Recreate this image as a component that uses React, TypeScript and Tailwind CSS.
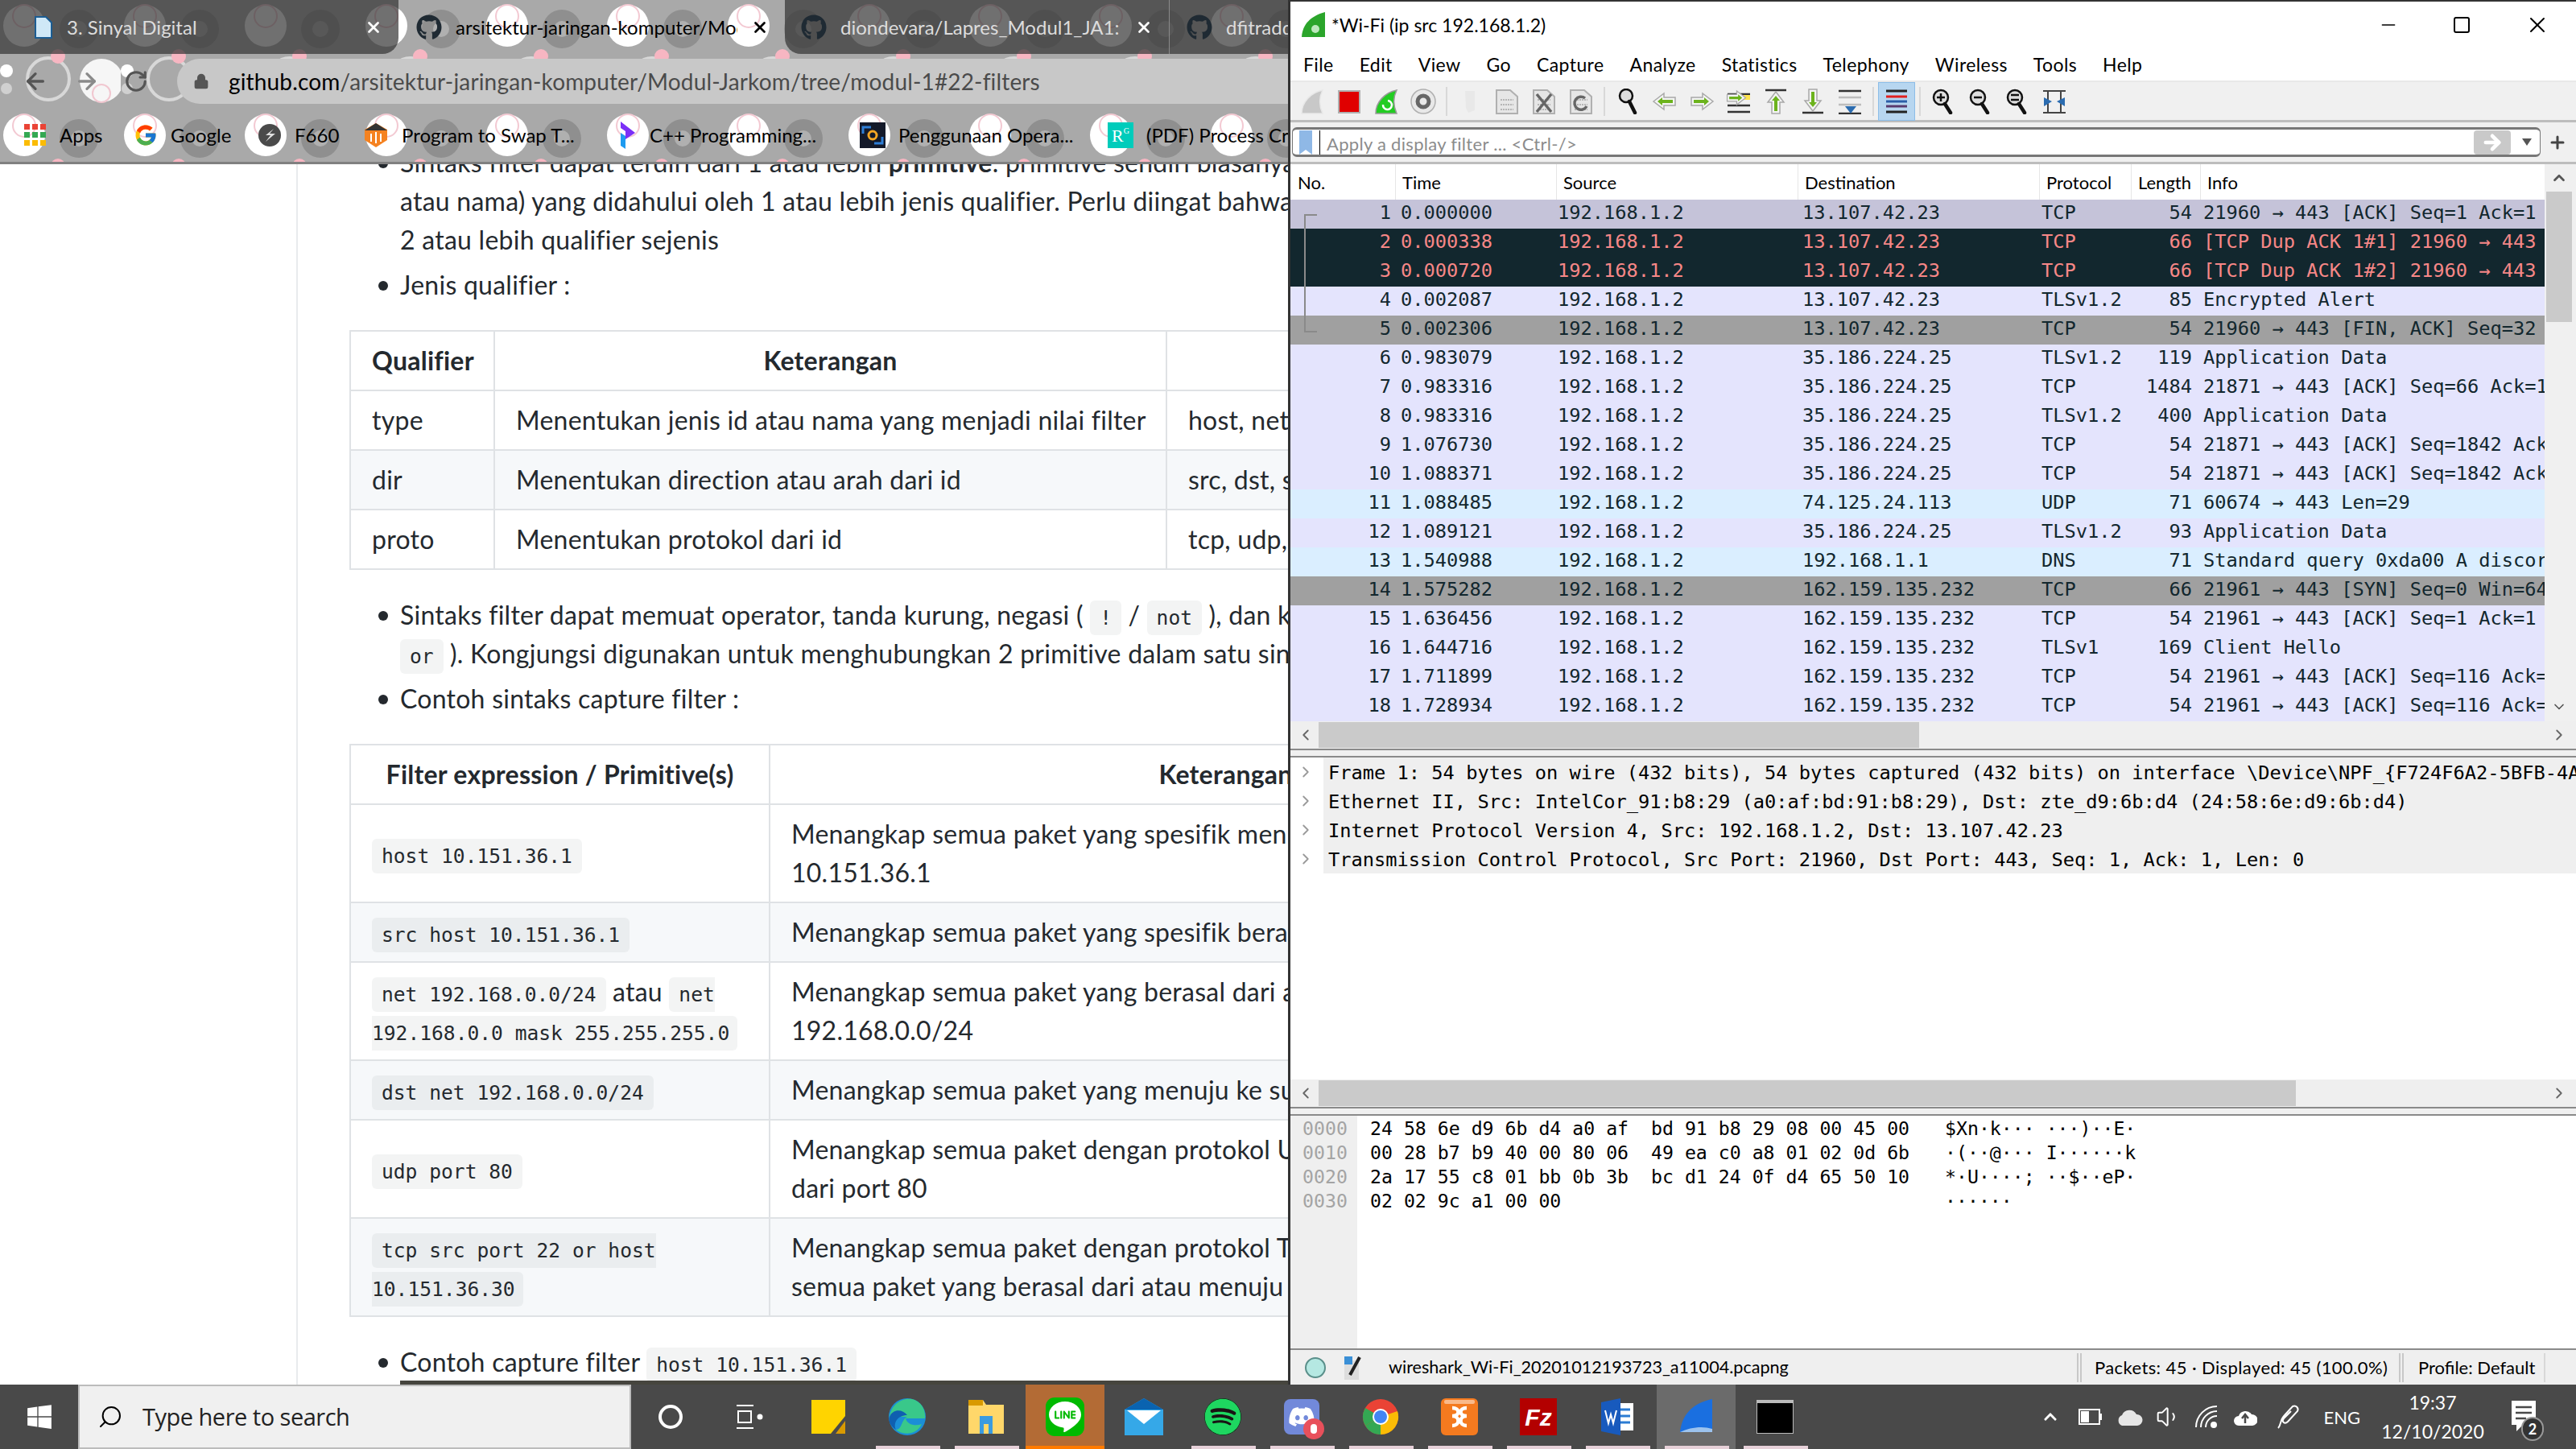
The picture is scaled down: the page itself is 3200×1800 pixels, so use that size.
import React from 'react';
import { FaGithub, FaWindows, FaDiscord, FaSpotify, FaChevronUp } from 'react-icons/fa';
import { FcGoogle } from 'react-icons/fc';
import { SiLine } from 'react-icons/si';
import { Lock, ArrowLeft, ArrowRight, RotateCw, X, Search, Minus, Square, ChevronLeft, ChevronRight, ChevronUp, ChevronDown, Plus, Volume1 } from 'lucide-react';

const sans = "font-['Lato','Open_Sans',sans-serif]";
const mono = "font-['DejaVu_Sans_Mono',monospace]";

// theme picture behind the browser tabs
const ThemeDots = () => (
  <svg className="absolute inset-0 w-full h-full" aria-hidden="true">
    <defs>
      <pattern id="dots" width="150" height="136" patternUnits="userSpaceOnUse">
        <circle cx="30" cy="32" r="26" fill="#ffffff" />
        <circle cx="30" cy="20" r="14" fill="none" stroke="#f3c9d2" strokeWidth="2" />
        <circle cx="98" cy="36" r="24" fill="#8f8f8f" />
        <circle cx="98" cy="36" r="10" fill="#b0b0b0" />
        <circle cx="60" cy="98" r="26" fill="none" stroke="#d8d8d8" strokeWidth="4" />
        <circle cx="126" cy="100" r="27" fill="#f6f6f6" />
        <circle cx="126" cy="116" r="11" fill="none" stroke="#f1c7d0" strokeWidth="2" />
        <circle cx="8" cy="88" r="8" fill="#ffffff" />
        <circle cx="8" cy="110" r="7" fill="#d0d0d0" />
        <circle cx="72" cy="70" r="9" fill="#f7b6c2" />
      </pattern>
    </defs>
    <rect width="100%" height="100%" fill="#a9a9a9" />
    <rect width="100%" height="100%" fill="url(#dots)" />
  </svg>
);

const Tab = ({ title, active, icon, className, close = true }: { title: string; active?: boolean; icon: React.ReactNode; className: string; close?: boolean }) => (
  <div className={`relative ${className} h-[67px] shrink-0 flex items-center pr-[20px] gap-[17px] ${active ? 'rounded-t-[20px] text-black' : 'bg-[#333333]/70 text-[#dcdcdc]'}`}>
    {icon}
    <span className={`flex-1 overflow-hidden whitespace-nowrap text-[24px] ${sans}`}>{title}</span>
    {close && <X className={`w-[22px] h-[22px] shrink-0 ${active ? 'text-black' : 'text-white'}`} strokeWidth={3} />}
  </div>
);

const bookmarks: { label: string; icon: React.ReactNode; w: string }[] = [
  {
    label: 'Apps',
    w: 'w-[136px]',
    icon: (
      <svg width="28" height="28" viewBox="0 0 28 28">
        {[0, 1, 2].map((r) =>
          [0, 1, 2].map((c) => (
            <rect key={`${r}${c}`} x={c * 10} y={r * 10} width="7" height="7" fill={['#ea4335', '#34a853', '#fbbc05'][r]} />
          ))
        )}
      </svg>
    ),
  },
  { label: 'Google', w: 'w-[154px]', icon: <FcGoogle className="w-[30px] h-[30px]" /> },
  {
    label: 'F660',
    w: 'w-[131px]',
    icon: (
      <svg width="30" height="30" viewBox="0 0 30 30">
        <circle cx="15" cy="15" r="14" fill="#4a4a4a" />
        <path d="M20 7 L10 15 H16 L10 23 L22 13 H15 Z" fill="#e0e0e0" />
      </svg>
    ),
  },
  {
    label: 'Program to Swap T...',
    w: 'w-[318px]',
    icon: (
      <svg width="32" height="32" viewBox="0 0 32 32">
        <path d="M16 1 L30 9 V22 L16 31 L2 22 V9 Z" fill="#f58220" />
        <path d="M2 10 L16 1 L30 10 Z" fill="#333" />
        <path d="M10 14 V24 M16 12 V26 M22 14 V24" stroke="#fff" strokeWidth="2" />
      </svg>
    ),
  },
  {
    label: 'C++ Programming...',
    w: 'w-[299px]',
    icon: (
      <svg width="22" height="34" viewBox="0 0 22 34">
        <path d="M2 0 L20 14 L8 22 V12 L2 8 Z" fill="#7b2ff7" />
        <path d="M2 14 L8 18 V34 L2 30 Z" fill="#1e9bf0" />
      </svg>
    ),
  },
  {
    label: 'Penggunaan Opera...',
    w: 'w-[308px]',
    icon: (
      <svg width="32" height="32" viewBox="0 0 32 32">
        <rect width="32" height="32" fill="#141a2a" />
        <path d="M4 14 V6 H14 M28 18 V26 H18" stroke="#2f7fd6" strokeWidth="3" fill="none" />
        <circle cx="16" cy="16" r="5" fill="none" stroke="#f5a623" strokeWidth="3" />
      </svg>
    ),
  },
  {
    label: '(PDF) Process Creation',
    w: 'w-[320px]',
    icon: <span className={`w-[32px] h-[32px] bg-[#00ccbb] text-white text-[22px] flex items-center justify-center font-['Liberation_Serif',serif]`}>R<sup className="text-[10px]">G</sup></span>,
  },
];

const ChromeHeader = () => (
  <div className="relative h-[204px] shrink-0 overflow-hidden border-b-[3px] border-[#808080]">
    <ThemeDots />
    <div className="relative flex">
      <Tab className="w-[495px] pl-[42px] rounded-br-[20px]" title="3. Sinyal Digital" icon={
        <svg width="24" height="28" viewBox="0 0 24 28" className="shrink-0"><path d="M2 1 H15 L22 8 V27 H2 Z" fill="#cfe8f7" stroke="#1c5d93" strokeWidth="2" /></svg>
      } />
      <Tab active className="w-[480px] pl-[22px]" title="arsitektur-jaringan-komputer/Modul-Jarkom" icon={<FaGithub className="w-[32px] h-[32px] text-[#1f2a33] shrink-0" />} />
      <Tab className="w-[477px] pl-[20px] rounded-bl-[20px]" title="diondevara/Lapres_Modul1_JA1:" icon={<FaGithub className="w-[32px] h-[32px] text-[#1f2a33] shrink-0" />} />
      <Tab close={false} className="w-[300px] pl-[21px] border-l border-[#8a8a8a]" title="dfitradd/" icon={<FaGithub className="w-[32px] h-[32px] text-[#1f2a33] shrink-0" />} />
    </div>
    <div className="relative flex items-center h-[68px] pl-[28px]">
      <ArrowLeft className="w-[32px] h-[32px] text-[#555]" strokeWidth={2.5} />
      <ArrowRight className="ml-[32px] w-[32px] h-[32px] text-[#8a8a8a]" strokeWidth={2.5} />
      <RotateCw className="ml-[30px] w-[30px] h-[30px] text-[#555]" strokeWidth={2.5} />
      <div className="ml-[36px] flex-1 h-[56px] rounded-l-[28px] bg-[#c8c8c8] flex items-center pl-[20px]">
        <Lock className="w-[20px] h-[24px] text-[#555] fill-[#555]" />
        <span className={`ml-[24px] text-[28px] tracking-[0.16px] text-[#4b4b4b] whitespace-nowrap ${sans}`}>
          <span className="text-black">github.com</span>/arsitektur-jaringan-komputer/Modul-Jarkom/tree/modul-1#22-filters
        </span>
      </div>
    </div>
    <div className="relative flex items-center h-[66px] pl-[30px]">
      {bookmarks.map((b) => (
        <div key={b.label} className={`${b.w} shrink-0 flex items-center gap-[16px] whitespace-nowrap`}>
          {b.icon}
          <span className={`text-[24px] text-black ${sans}`}>{b.label}</span>
        </div>
      ))}
    </div>
  </div>
);

const codeFont = `${mono} text-[24.6px] leading-none tracking-normal`;

const Code = ({ children }: { children: React.ReactNode }) => (
  <code className={`${codeFont} px-[12px] py-[7px] rounded-[6px] bg-[#1b1f230d]`}>{children}</code>
);

// a code pill that wraps over two lines: open on the right of the first, on the left of the second
const CodeStart = ({ children }: { children: React.ReactNode }) => (
  <code className={`${codeFont} pl-[12px] py-[7px] rounded-l-[6px] bg-[#1b1f230d]`}>{children}</code>
);
const CodeEnd = ({ children }: { children: React.ReactNode }) => (
  <code className={`${codeFont} pr-[10px] py-[7px] rounded-r-[6px] bg-[#1b1f230d]`}>{children}</code>
);

const Bullet = ({ children, className = '' }: { children: React.ReactNode; className?: string }) => (
  <li className={`relative pl-[63px] leading-[48px] whitespace-nowrap ${className}`}>
    <span className="absolute left-[36px] top-[19px] w-[12px] h-[12px] rounded-full bg-[#24292e]" />
    {children}
  </li>
);

const qualifierRows = [
  ['type', 'Menentukan jenis id atau nama yang menjadi nilai filter', 'host, net, port, portrange'],
  ['dir', 'Menentukan direction atau arah dari id', 'src, dst, src or dst, src and dst'],
  ['proto', 'Menentukan protokol dari id', 'tcp, udp, icmp, arp'],
];

const filterRows: { expr: React.ReactNode; text: React.ReactNode }[] = [
  { expr: <Code>host 10.151.36.1</Code>, text: <>Menangkap semua paket yang spesifik menuju atau berasal dari<br />10.151.36.1</> },
  { expr: <Code>src host 10.151.36.1</Code>, text: 'Menangkap semua paket yang spesifik berasal dari 10.151.36.1' },
  {
    expr: <>
      <Code>net 192.168.0.0/24</Code> atau <CodeStart>net</CodeStart><br />
      <CodeEnd>192.168.0.0 mask 255.255.255.0</CodeEnd>
    </>,
    text: <>Menangkap semua paket yang berasal dari atau menuju<br />192.168.0.0/24</>,
  },
  { expr: <Code>dst net 192.168.0.0/24</Code>, text: 'Menangkap semua paket yang menuju ke subnet 192.168.0.0/24' },
  { expr: <Code>udp port 80</Code>, text: <>Menangkap semua paket dengan protokol UDP yang menuju atau<br />dari port 80</> },
  {
    expr: <>
      <CodeStart>tcp src port 22 or host</CodeStart><br />
      <CodeEnd>10.151.36.30</CodeEnd>
    </>,
    text: <>Menangkap semua paket dengan protokol TCP port 22 dan<br />semua paket yang berasal dari atau menuju 10.151.36.30</>,
  },
];

const tdClass = 'border-2 border-[#dfe2e5] px-[26px] py-[12px] leading-[48px] whitespace-nowrap overflow-hidden';

const GithubPage = () => (
  <div className={`relative flex-1 overflow-hidden bg-white text-[32px] tracking-[0.25px] text-[#24292e] ${sans}`}>
    <div className="absolute left-[368px] top-0 bottom-0 w-[2px] bg-[#e9ebed]" />
    <div className="ml-[434px] w-[1656px] -mt-[26px]">
      <ul>
        <Bullet>
          Sintaks filter dapat terdiri dari 1 atau lebih <b>primitive</b>. primitive sendiri biasanya berupa id (angka<br />
          atau nama) yang didahului oleh 1 atau lebih jenis qualifier. Perlu diingat bahwa tidak boleh ada<br />
          2 atau lebih qualifier sejenis
        </Bullet>
        <Bullet className="mt-[8px]">Jenis qualifier :</Bullet>
      </ul>
      <table className="table-fixed border-collapse w-[1656px] mt-[32px]">
        <colgroup>
          <col className="w-[179px]" />
          <col className="w-[835px]" />
          <col />
        </colgroup>
        <thead>
          <tr>
            <th className={`${tdClass} font-bold`}>Qualifier</th>
            <th className={`${tdClass} font-bold`}>Keterangan</th>
            <th className={`${tdClass} font-bold`}>Contoh nilai</th>
          </tr>
        </thead>
        <tbody>
          {qualifierRows.map((r, i) => (
            <tr key={r[0]} className={i % 2 === 1 ? 'bg-[#f6f8fa]' : 'bg-white'}>
              {r.map((c) => <td key={c} className={tdClass}>{c}</td>)}
            </tr>
          ))}
        </tbody>
      </table>
      <ul className="mt-[32px]">
        <Bullet>
          Sintaks filter dapat memuat operator, tanda kurung, negasi ( <Code>!</Code> / <Code>not</Code> ), dan konjungsi ( <Code>and</Code> /<br />
          <Code>or</Code> ). Kongjungsi digunakan untuk menghubungkan 2 primitive dalam satu sintaks
        </Bullet>
        <Bullet className="mt-[8px]">Contoh sintaks capture filter :</Bullet>
      </ul>
      <table className="table-fixed border-collapse w-[1656px] mt-[32px]">
        <colgroup>
          <col className="w-[521px]" />
          <col />
        </colgroup>
        <thead>
          <tr>
            <th className={`${tdClass} font-bold`}>Filter expression / Primitive(s)</th>
            <th className={`${tdClass} font-bold`}>Keterangan</th>
          </tr>
        </thead>
        <tbody>
          {filterRows.map((r, i) => (
            <tr key={i} className={i % 2 === 1 ? 'bg-[#f6f8fa]' : 'bg-white'}>
              <td className={tdClass}>{r.expr}</td>
              <td className={tdClass}>{r.text}</td>
            </tr>
          ))}
        </tbody>
      </table>
      <ul className="mt-[32px]">
        <Bullet>Contoh capture filter <Code>host 10.151.36.1</Code></Bullet>
      </ul>
    </div>
    <div className="absolute left-[497px] right-0 bottom-0 h-[5px] bg-[#46453e]" />
  </div>
);

// ---- wireshark ----

type Pkt = [number, string, string, string, string, number, string, string];
const L = 'bg-[#e4e4fd] text-[#12272e]';
const B = 'bg-[#daeeff] text-[#12272e]';
const G = 'bg-[#a0a0a0] text-[#12272e]';
const D = 'bg-[#12272e] text-[#f78787]';
const S = 'bg-[#c5c3d9] text-[#12272e]';
const A = '192.168.1.2';
const M = '35.186.224.25';
const C = '162.159.135.232';

const packets: Pkt[] = [
  [1, '0.000000', A, '13.107.42.23', 'TCP', 54, '21960 → 443 [ACK] Seq=1 Ack=1', S],
  [2, '0.000338', A, '13.107.42.23', 'TCP', 66, '[TCP Dup ACK 1#1] 21960 → 443', D],
  [3, '0.000720', A, '13.107.42.23', 'TCP', 66, '[TCP Dup ACK 1#2] 21960 → 443', D],
  [4, '0.002087', A, '13.107.42.23', 'TLSv1.2', 85, 'Encrypted Alert', L],
  [5, '0.002306', A, '13.107.42.23', 'TCP', 54, '21960 → 443 [FIN, ACK] Seq=32', G],
  [6, '0.983079', A, M, 'TLSv1.2', 119, 'Application Data', L],
  [7, '0.983316', A, M, 'TCP', 1484, '21871 → 443 [ACK] Seq=66 Ack=1', L],
  [8, '0.983316', A, M, 'TLSv1.2', 400, 'Application Data', L],
  [9, '1.076730', A, M, 'TCP', 54, '21871 → 443 [ACK] Seq=1842 Ack', L],
  [10, '1.088371', A, M, 'TCP', 54, '21871 → 443 [ACK] Seq=1842 Ack', L],
  [11, '1.088485', A, '74.125.24.113', 'UDP', 71, '60674 → 443 Len=29', B],
  [12, '1.089121', A, M, 'TLSv1.2', 93, 'Application Data', L],
  [13, '1.540988', A, '192.168.1.1', 'DNS', 71, 'Standard query 0xda00 A discor', B],
  [14, '1.575282', A, C, 'TCP', 66, '21961 → 443 [SYN] Seq=0 Win=64', G],
  [15, '1.636456', A, C, 'TCP', 54, '21961 → 443 [ACK] Seq=1 Ack=1', L],
  [16, '1.644716', A, C, 'TLSv1', 169, 'Client Hello', L],
  [17, '1.711899', A, C, 'TCP', 54, '21961 → 443 [ACK] Seq=116 Ack=', L],
  [18, '1.728934', A, C, 'TCP', 54, '21961 → 443 [ACK] Seq=116 Ack=', L],
];

const menus = ['File', 'Edit', 'View', 'Go', 'Capture', 'Analyze', 'Statistics', 'Telephony', 'Wireless', 'Tools', 'Help'];

const Ico = ({ children }: { children: React.ReactNode }) => (
  <svg width="32" height="32" viewBox="0 0 32 32">{children}</svg>
);

const DocIcon = ({ children }: { children?: React.ReactNode }) => (
  <Ico>
    <path d="M3 2 H20 L29 10 V31 H3 Z" fill="#e6e6e6" stroke="#b0b0b0" strokeWidth="2" />
    <path d="M8 14 H24 M8 20 H24 M8 26 H24" stroke="#b5b5b5" strokeWidth="2" strokeDasharray="2 1" />
    {children}
  </Ico>
);

// green arrow with a pale outline, pointing left; rotated for the others
const Arrow = ({ rot = 0 }: { rot?: number }) => (
  <g transform={`rotate(${rot} 16 16)`}>
    <path d="M2 16 L15 6 V11 H29 V21 H15 V26 Z" fill="#f4f4f4" stroke="#a8a8a8" strokeWidth="1.5" />
    <path d="M7 16 L13 11 V14 H26 V18 H13 V21 Z" fill="#6cb31d" />
  </g>
);

const Mag = ({ sign }: { sign?: string }) => (
  <Ico>
    <circle cx="13" cy="11" r="9" fill="#dedede" stroke="#111" strokeWidth="2.5" />
    <path d="M18 19 L25 30" stroke="#111" strokeWidth="4.5" strokeLinecap="round" />
    {sign === '+' && <path d="M8 11 H18 M13 6 V16" stroke="#111" strokeWidth="2.5" />}
    {sign === '-' && <path d="M8 11 H18" stroke="#111" strokeWidth="2.5" />}
    {sign === '=' && <path d="M8 8 H18 M8 14 H18" stroke="#111" strokeWidth="2.5" />}
  </Ico>
);

const toolItems: React.ReactNode[] = [
  <Ico><path d="M3 31 C3 17 14 5 29 2 C24 12 25 22 29 31 Z" fill="#c8c8c8" stroke="#e8e8e8" strokeWidth="1.5" /></Ico>,
  <Ico><rect x="3" y="3" width="26" height="27" fill="#e00000" stroke="#b0b0b0" strokeWidth="2" /></Ico>,
  <Ico><path d="M3 31 C3 17 14 5 29 2 C24 12 25 22 29 31 Z" fill="#22cc22" stroke="#9a9a9a" strokeWidth="1.5" /><path d="M12 20 a5.5 5.5 0 1 0 6 -5" fill="none" stroke="#fff" strokeWidth="2.5" /></Ico>,
  <Ico><circle cx="16" cy="16" r="15" fill="#e8e8e8" stroke="#b0b0b0" strokeWidth="1.5" /><circle cx="16" cy="16" r="7" fill="none" stroke="#666" strokeWidth="5" /></Ico>,
  'sep',
  <Ico><path d="M10 3 H22 V27 L14 30 L11 24 Z" fill="#e8e8e8" /></Ico>,
  <DocIcon />,
  <DocIcon><path d="M7 7 L25 29 M25 7 L7 29" stroke="#666" strokeWidth="3.5" /></DocIcon>,
  <DocIcon><path d="M23 22 a8 8 0 1 1 -2 -10" fill="none" stroke="#666" strokeWidth="3.5" /></DocIcon>,
  'sep',
  <Ico>
    <circle cx="14" cy="9" r="8" fill="#dedede" stroke="#111" strokeWidth="2.5" />
    <path d="M18 16 L25 30" stroke="#111" strokeWidth="4.5" strokeLinecap="round" />
  </Ico>,
  <Ico><Arrow /></Ico>,
  <Ico><Arrow rot={180} /></Ico>,
  <Ico><path d="M2 7 H30 M2 21 H30 M2 29 H30" stroke="#333" strokeWidth="2.5" /><rect x="22" y="8" width="8" height="6" fill="#ffe34d" /><g transform="translate(-1 -2) scale(.85)"><Arrow rot={180} /></g></Ico>,
  <Ico><path d="M3 2 H29" stroke="#333" strokeWidth="2.5" /><g transform="translate(0 2)"><Arrow rot={90} /></g></Ico>,
  <Ico><path d="M3 30 H29" stroke="#333" strokeWidth="2.5" /><g transform="translate(0 -2)"><Arrow rot={-90} /></g></Ico>,
  <Ico><path d="M2 3 H30 M2 31 H30" stroke="#333" strokeWidth="2.5" /><path d="M2 11 H30 M2 20 H30" stroke="#bdbdbd" strokeWidth="2.5" /><path d="M10 22 H24 L17 31 Z" fill="#2b6cb0" /></Ico>,
  'sep',
  'auto',
  'sep',
  <Mag sign="+" />,
  <Mag sign="-" />,
  <Mag sign="=" />,
  <Ico><path d="M2 3 H30 M2 30 H30 M8 3 V30 M24 3 V30" stroke="#444" strokeWidth="2" /><path d="M3 11 L13 16 L3 22 Z M29 11 L19 16 L29 22 Z" fill="#2b6cb0" /></Ico>,
];

const detailLines = [
  'Frame 1: 54 bytes on wire (432 bits), 54 bytes captured (432 bits) on interface \\Device\\NPF_{F724F6A2-5BFB-4A',
  'Ethernet II, Src: IntelCor_91:b8:29 (a0:af:bd:91:b8:29), Dst: zte_d9:6b:d4 (24:58:6e:d9:6b:d4)',
  'Internet Protocol Version 4, Src: 192.168.1.2, Dst: 13.107.42.23',
  'Transmission Control Protocol, Src Port: 21960, Dst Port: 443, Seq: 1, Ack: 1, Len: 0',
];

const hexLines = [
  ['0000', '24 58 6e d9 6b d4 a0 af  bd 91 b8 29 08 00 45 00', '$Xn·k··· ···)··E·'],
  ['0010', '00 28 b7 b9 40 00 80 06  49 ea c0 a8 01 02 0d 6b', '·(··@··· I······k'],
  ['0020', '2a 17 55 c8 01 bb 0b 3b  bc d1 24 0f d4 65 50 10', '*·U····; ··$··eP·'],
  ['0030', '02 02 9c a1 00 00', '······'],
];

const HScroll = ({ thumb }: { thumb: string }) => (
  <div className="h-[34px] shrink-0 bg-[#efefef] flex items-center">
    <ChevronLeft className="w-[22px] h-[22px] ml-[8px] mr-[5px] text-[#666] shrink-0" />
    <div className="flex-1 h-full py-[1px]"><div className={`${thumb} h-full bg-[#cacaca]`} /></div>
    <ChevronRight className="w-[22px] h-[22px] mx-[10px] text-[#666] shrink-0" />
  </div>
);

const Wireshark = () => (
  <div className={`flex-1 flex flex-col min-w-0 bg-white text-black border-t-[2px] border-l-[3px] border-[#333] tracking-[0.4px] ${sans}`}>
    <div className="h-[58px] shrink-0 flex items-center pl-[13px]">
      <svg width="32" height="34" viewBox="0 0 32 34"><path d="M1 32 C2 16 12 6 30 1 L30 32 Z" fill="#2ba52b" /><circle cx="18" cy="22" r="5" fill="#bde8bd" /></svg>
      <span className="ml-[6px] text-[23px] tracking-normal">*Wi-Fi (ip src 192.168.1.2)</span>
      <div className="ml-auto flex items-center">
        <Minus className="w-[26px] h-[26px] mr-[66px]" strokeWidth={1.5} />
        <Square className="w-[24px] h-[24px] mr-[66px]" strokeWidth={2} />
        <X className="w-[32px] h-[32px] mr-[32px]" strokeWidth={1.5} />
      </div>
    </div>
    <div className="h-[42px] shrink-0 flex items-center pl-[16px] gap-[32px] text-[23px] border-b-[2px] border-[#e8e8e8]">
      {menus.map((m) => <span key={m}>{m}</span>)}
    </div>
    <div className="h-[50px] shrink-0 bg-[#f0f0f0] border-b-[3px] border-[#bdbdbd] flex items-center pl-[4px]">
      {toolItems.map((it, i) =>
        it === 'sep' ? (
          <div key={i} className="w-[2px] h-[36px] bg-[#d8d8d8] mx-[5px] shrink-0" />
        ) : it === 'auto' ? (
          <div key={i} className="w-[46px] h-[48px] shrink-0 bg-[#b7d6f0] border border-[#8cbde8] flex items-center justify-center">
            <Ico><path d="M3 3 H29 M3 29 H29" stroke="#222" strokeWidth="3" /><path d="M3 10 H29" stroke="#e02020" strokeWidth="3" /><path d="M3 16 H29" stroke="#2b5ea8" strokeWidth="3" /><path d="M3 22 H29" stroke="#5a3a6e" strokeWidth="3" /></Ico>
          </div>
        ) : (
          <div key={i} className="w-[46px] h-[47px] shrink-0 flex items-center justify-center">{it}</div>
        )
      )}
    </div>
    <div className="h-[52px] shrink-0 bg-[#f0f0f0] border-b-[3px] border-[#bdbdbd] flex items-center px-[2px]">
      <div className="flex-1 h-[37px] bg-white rounded-[6px] border-y-[3px] border-x-[1px] border-[#777] flex items-center pl-[8px] pr-[4px]">
        <svg width="16" height="30" viewBox="0 0 16 30"><path d="M0 0 H16 V30 L8 24 L0 30 Z" fill="#8fb8e6" /></svg>
        <div className="ml-[9px] w-[1px] h-[30px] bg-black" />
        <span className="ml-[8px] pt-[3px] text-[22px] tracking-[0.3px] text-[#8c8c8c]">Apply a display filter ... &lt;Ctrl-/&gt;</span>
        <div className="ml-auto w-[46px] h-[30px] rounded-[4px] bg-[#c9c9c9] flex items-center justify-center">
          <ArrowRight className="w-[28px] h-[28px] text-white" strokeWidth={4} />
        </div>
        <div className="ml-[14px] w-0 h-0 border-x-[6px] border-x-transparent border-t-[9px] border-t-[#555]" />
        <div className="w-[6px]" />
      </div>
      <Plus className="w-[24px] h-[24px] mx-[9px] text-[#444]" strokeWidth={3} />
    </div>
    <div className="relative h-[692px] shrink-0 flex">
      <div className="flex-1 min-w-0 flex flex-col">
        <div className="h-[44px] shrink-0 flex text-[22px] tracking-normal items-center">
          <span className="w-[131px] h-full pl-[9px] flex items-center border-r border-[#e6e6e6]">No.</span>
          <span className="w-[200px] h-full pl-[8px] flex items-center border-r border-[#e6e6e6]">Time</span>
          <span className="w-[300px] h-full pl-[8px] flex items-center border-r border-[#e6e6e6]">Source</span>
          <span className="w-[300px] h-full pl-[8px] flex items-center border-r border-[#e6e6e6]">Destination</span>
          <span className="w-[114px] h-full pl-[8px] flex items-center border-r border-[#e6e6e6]">Protocol</span>
          <span className="w-[86px] h-full pl-[8px] flex items-center border-r border-[#e6e6e6]">Length</span>
          <span className="pl-[8px]">Info</span>
        </div>
        <div className={`relative ${mono} text-[23.7px] tracking-normal`}>
          {packets.map((p) => (
            <div key={p[0]} className={`h-[36px] pb-[2px] flex items-center whitespace-pre overflow-hidden ${p[7]}`}>
              <span className="w-[125px] shrink-0 text-right">{p[0]}</span>
              <span className="w-[200px] shrink-0 pl-[12px]">{p[1]}</span>
              <span className="w-[300px] shrink-0 pl-[7px]">{p[2]}</span>
              <span className="w-[301px] shrink-0 pl-[11px]">{p[3]}</span>
              <span className="w-[114px] shrink-0 pl-[7px]">{p[4]}</span>
              <span className="w-[80px] shrink-0 text-right">{p[5]}</span>
              <span className="pl-[14px]">{p[6]}</span>
            </div>
          ))}
          <div className="absolute left-[17px] top-[18px] w-[2px] h-[146px] bg-[#8a8a8a]" />
          <div className="absolute left-[17px] top-[18px] w-[16px] h-[2px] bg-[#8a8a8a]" />
          <div className="absolute left-[17px] top-[163px] w-[16px] h-[2px] bg-[#8a8a8a]" />
        </div>
      </div>
      <div className="w-[39px] shrink-0 flex flex-col bg-[#f0f0f0] pl-[2px] pr-[5px]">
        <div className="h-[34px] shrink-0 flex items-center justify-center"><ChevronUp className="w-[22px] h-[22px] text-[#555]" strokeWidth={3} /></div>
        <div className="h-[162px] bg-[#cacaca]" />
        <div className="mt-auto h-[34px] mb-[1px] flex items-center justify-center"><ChevronDown className="w-[20px] h-[20px] text-[#555]" /></div>
      </div>
    </div>
    <div className="shrink-0"><HScroll thumb="w-[746px]" /></div>
    <div className="h-[11px] shrink-0 bg-[#f0f0f0] border-y-[2px] border-[#8a8a8a]" />
    <div className="flex-1 min-h-0 flex flex-col overflow-hidden">
      <div className={`${mono} text-[23.7px] tracking-normal whitespace-pre`}>
        {detailLines.map((d) => (
          <div key={d} className="h-[36px] flex items-center">
            <span className="w-[41px] h-full shrink-0 flex items-center pl-[8px]"><ChevronRight className="w-[22px] h-[24px] text-[#9a9a9a]" /></span>
            <span className="flex-1 h-full bg-[#efefef] flex items-center pl-[6px] pt-[3px] overflow-hidden">{d}</span>
          </div>
        ))}
      </div>
      <div className="mt-auto"><HScroll thumb="w-[1214px]" /></div>
    </div>
    <div className="h-[11px] shrink-0 bg-[#f0f0f0] border-y-[2px] border-[#8a8a8a]" />
    <div className={`h-[289px] shrink-0 flex ${mono} text-[23.2px] tracking-normal whitespace-pre`}>
      <div className="w-[83px] shrink-0 bg-[#efefef] pl-[15px] pt-[1px] text-[#a4a4a4]">
        {hexLines.map((h) => <div key={h[0]} className="h-[30px] flex items-center">{h[0]}</div>)}
      </div>
      <div className="pl-[16px] pt-[1px]">
        {hexLines.map((h) => (
          <div key={h[0]} className="h-[30px] flex items-center">
            <span className="w-[714px] shrink-0">{h[1]}</span>
            <span>{h[2]}</span>
          </div>
        ))}
      </div>
    </div>
    <div className="h-[45px] shrink-0 bg-[#efefef] border-t-[2px] border-[#8a8a8a] flex items-center text-[22px] whitespace-nowrap">
      <div className="ml-[18px] w-[26px] h-[26px] rounded-full bg-[#b5e8e2] border-2 border-[#5a8f8a]" />
      <svg className="ml-[22px]" width="24" height="30" viewBox="0 0 24 30"><rect x="1" y="6" width="18" height="24" fill="#ddd" /><rect x="1" y="1" width="10" height="10" fill="#3a8fd6" /><path d="M8 24 L20 2" stroke="#222" strokeWidth="4" /></svg>
      <span className="ml-[32px] text-[21.6px] tracking-normal">wireshark_Wi-Fi_20201012193723_a11004.pcapng</span>
      <div className="ml-auto flex items-center h-full">
        <div className="w-[6px] h-[36px] border-x-2 border-[#c8c8c8]" />
        <span className="ml-[16px] w-[378px]">Packets: 45 · Displayed: 45 (100.0%)</span>
        <div className="w-[6px] h-[36px] border-x-2 border-[#c8c8c8]" />
        <span className="ml-[18px] w-[156px] tracking-normal">Profile: Default</span>
        <div className="w-[2px] h-[36px] bg-[#d8d8d8]" />
        <div className="w-[38px]" />
      </div>
    </div>
  </div>
);

// ---- taskbar ----

const TaskIcon = ({ children, open, active, line }: { children: React.ReactNode; open?: boolean; active?: boolean; line?: boolean }) => (
  <div className={`relative w-[98px] h-full shrink-0 flex items-center justify-center ${active ? 'bg-[#6b6b6b]' : ''} ${line ? 'bg-[#b36b35]' : ''}`}>
    {children}
    {open && <div className="absolute bottom-0 left-[10px] right-[8px] h-[4px] bg-[#e6d0d8]" />}
    {line && <div className="absolute bottom-0 left-0 right-0 h-[4px] bg-[#ff7a00]" />}
  </div>
);

const Taskbar = () => (
  <div className={`h-[80px] shrink-0 bg-[#494949] flex items-stretch text-white ${sans}`}>
    <div className="w-[97px] flex items-center justify-center"><FaWindows className="w-[34px] h-[34px] text-white" /></div>
    <div className="w-[687px] bg-[#f0f0f0] border-2 border-[#bcbcbc] flex items-center pl-[22px] text-[#222]">
      <Search className="w-[32px] h-[32px] -scale-x-100 text-black" strokeWidth={1.5} />
      <span className={`ml-[24px] text-[29px] font-['Open_Sans',sans-serif] tracking-[-0.5px]`}>Type here to search</span>
    </div>
    <TaskIcon><div className="w-[30px] h-[30px] rounded-full border-[4px] border-white" /></TaskIcon>
    <TaskIcon>
      <svg width="34" height="32" viewBox="0 0 34 32" fill="none" stroke="#fff" strokeWidth="2"><path d="M1 2 H22 M1 30 H22" /><rect x="3" y="9" width="16" height="14" /><circle cx="30" cy="16" r="2.5" fill="#fff" /></svg>
    </TaskIcon>
    <TaskIcon>
      <svg width="42" height="42" viewBox="0 0 42 42"><rect width="42" height="42" fill="#ffd400" /><path d="M42 20 V42 H24 Z" fill="#4a4a4a" /><path d="M42 26 V42 H30 Z" fill="#d99a00" /></svg>
    </TaskIcon>
    <TaskIcon open>
      <svg width="48" height="48" viewBox="0 0 48 48"><circle cx="24" cy="24" r="23" fill="#1b8ed6" /><path d="M2 24 C4 8 18 0 30 2 C42 5 47 16 46 26 H22 C24 34 34 36 42 33 C36 46 20 48 10 40 C18 40 16 28 24 24 Z" fill="#39c88a" /><path d="M24 22 C12 22 6 32 10 40 C4 36 0 30 2 24 C6 14 18 14 24 22 Z" fill="#0f5fb0" /></svg>
    </TaskIcon>
    <TaskIcon open>
      <svg width="44" height="42" viewBox="0 0 44 42"><path d="M0 0 H18 L22 6 H44 V42 H0 Z" fill="#ffd76a" /><rect width="18" height="7" fill="#d99a00" /><rect x="14" y="20" width="16" height="22" fill="#3b9be0" /><rect x="19" y="30" width="6" height="12" fill="#ffd76a" /></svg>
    </TaskIcon>
    <TaskIcon line>
      <span className="w-[48px] h-[48px] rounded-[11px] bg-[#00b900] flex items-center justify-center"><SiLine className="w-[40px] h-[40px] text-white" /></span>
    </TaskIcon>
    <TaskIcon>
      <svg width="48" height="46" viewBox="0 0 48 46"><path d="M0 14 L24 0 L48 14 V46 H0 Z" fill="#35a8e8" /><path d="M0 14 L24 0 L48 14 Z" fill="#0a63b0" /><path d="M3 15 H45 L24 32 Z" fill="#fff" /></svg>
    </TaskIcon>
    <TaskIcon open><span className="w-[46px] h-[46px] rounded-full bg-[#1ed760] flex items-center justify-center"><FaSpotify className="w-[46px] h-[46px] text-[#1ed760] bg-[#191414] rounded-full" /></span></TaskIcon>
    <TaskIcon open>
      <span className="relative w-[44px] h-[44px] rounded-[8px] bg-[#7289da] flex items-center justify-center">
        <FaDiscord className="w-[34px] h-[34px] text-white" />
        <span className="absolute -right-[6px] -bottom-[6px] w-[26px] h-[26px] rounded-full bg-[#e8505b] flex items-center justify-center"><span className="w-[8px] h-[12px] rounded-full bg-white" /></span>
      </span>
    </TaskIcon>
    <TaskIcon open>
      <svg width="46" height="46" viewBox="0 0 46 46"><circle cx="23" cy="23" r="22" fill="#ea4335" /><path d="M23 23 L4 34 A22 22 0 0 0 23 45 Z" fill="#34a853" /><path d="M4 12 A22 22 0 0 0 4 34 L23 23 Z" fill="#34a853" /><path d="M23 23 L23 45 A22 22 0 0 0 44 16 Z" fill="#fbbc05" /><circle cx="23" cy="23" r="10" fill="#fff" /><circle cx="23" cy="23" r="8" fill="#4285f4" /></svg>
    </TaskIcon>
    <TaskIcon open>
      <svg width="46" height="46" viewBox="0 0 46 46"><rect width="46" height="46" rx="6" fill="#f47a1f" /><rect x="4" y="2" width="38" height="5" rx="2" fill="#f9b98a" /><path d="M14 12 C24 12 24 22 14 22 C24 22 24 34 14 34 M32 12 C22 12 22 22 32 22 C22 22 22 34 32 34" fill="none" stroke="#fff" strokeWidth="4.5" /></svg>
    </TaskIcon>
    <TaskIcon open>
      <span className={`w-[46px] h-[46px] bg-[#b30000] flex items-center justify-center text-white text-[30px] font-bold italic font-['Liberation_Sans',sans-serif]`}>Fz</span>
    </TaskIcon>
    <TaskIcon open>
      <svg width="40" height="46" viewBox="0 0 40 46"><rect x="14" y="6" width="26" height="34" fill="#fff" /><path d="M18 14 H36 M18 22 H36 M18 30 H36" stroke="#2b7cd3" strokeWidth="3" /><path d="M0 5 L24 0 V46 L0 41 Z" fill="#185abd" /><path d="M5 15 L9 31 L12 20 L15 31 L19 15" fill="none" stroke="#fff" strokeWidth="2" /></svg>
    </TaskIcon>
    <TaskIcon open active>
      <svg width="44" height="46" viewBox="0 0 44 46"><path d="M2 42 C4 22 16 6 42 1 V42 Z" fill="#1a6fe0" /><path d="M2 42 H42 V38 C30 34 14 36 2 42 Z" fill="#9cc3ee" /></svg>
    </TaskIcon>
    <TaskIcon open>
      <span className="relative w-[46px] h-[42px] bg-black border-t-[4px] border-[#bbb] border-x border-b" />
    </TaskIcon>
    <div className="flex-1 flex items-center justify-end pr-[46px]">
      <FaChevronUp className="w-[22px] h-[18px] text-white mr-[24px]" />
      <svg className="mr-[16px]" width="30" height="20" viewBox="0 0 30 20" fill="none" stroke="#fff" strokeWidth="2"><rect x="1" y="1" width="25" height="18" /><rect x="4" y="4" width="8" height="12" fill="#fff" /><path d="M28 6 V14" /></svg>
      <svg className="mr-[16px]" width="34" height="24" viewBox="0 0 34 24"><path d="M8 23 A7 7 0 0 1 8 10 A10 10 0 0 1 26 9 A7 7 0 0 1 27 23 Z" fill="#e6e6e6" /></svg>
      <Volume1 className="w-[32px] h-[32px] mr-[16px] text-white" strokeWidth={1.5} />
      <svg className="mr-[18px]" width="30" height="30" viewBox="0 0 30 30" fill="none" stroke="#fff" strokeWidth="2"><path d="M2 28 A26 26 0 0 1 28 2 M8 28 A20 20 0 0 1 28 8 M14 28 A14 14 0 0 1 28 14" /><circle cx="24" cy="25" r="4" fill="#fff" stroke="none" /></svg>
      <svg className="mr-[24px]" width="30" height="24" viewBox="0 0 30 24"><path d="M7 23 A6 6 0 0 1 7 11 A9 9 0 0 1 23 9 A7 7 0 0 1 24 23 Z" fill="#fff" /><path d="M15 20 V11 M11 14 L15 9 L19 14" stroke="#494949" strokeWidth="2.5" fill="none" /></svg>
      <svg className="mr-[26px]" width="32" height="32" viewBox="0 0 32 32" fill="none" stroke="#fff" strokeWidth="2"><path d="M2 30 C6 26 4 20 10 14 L20 3 C24 1 28 5 26 9 L14 22 C10 26 6 22 9 18 L18 9" /></svg>
      <span className="text-[22px] mr-[28px]">ENG</span>
      <div className="w-[124px] flex flex-col items-center text-[23px] leading-[36px] mr-[36px]">
        <span>19:37</span>
        <span>12/10/2020</span>
      </div>
      <div className="relative w-[34px] h-[40px]">
        <svg width="30" height="38" viewBox="0 0 30 38"><path d="M0 0 H30 V30 H14 L6 38 V30 H0 Z" fill="#fff" /><path d="M5 8 H25 M5 15 H25 M5 22 H18" stroke="#494949" strokeWidth="2.5" /></svg>
        <span className="absolute -right-[6px] -bottom-[10px] w-[28px] h-[30px] rounded-full bg-[#333] border-2 border-[#999] flex items-center justify-center text-[18px] font-bold">2</span>
      </div>
    </div>
  </div>
);

export default function App() {
  return (
    <div className="w-[3200px] h-[1800px] flex flex-col overflow-hidden bg-white">
      <div className="flex-1 min-h-0 flex">
        <div className="w-[1600px] shrink-0 flex flex-col overflow-hidden">
          <ChromeHeader />
          <GithubPage />
        </div>
        <Wireshark />
      </div>
      <Taskbar />
    </div>
  );
}
